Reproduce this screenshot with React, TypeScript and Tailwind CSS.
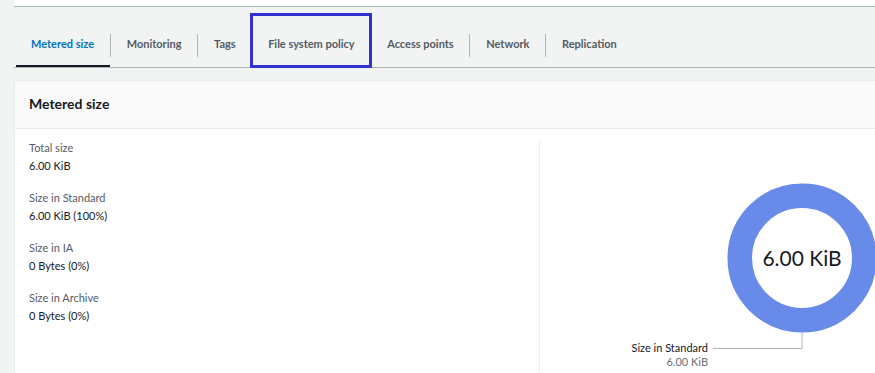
const tabs = [
  "Metered size",
  "Monitoring",
  "Tags",
  "File system policy",
  "Access points",
  "Network",
  "Replication",
];

const stats = [
  { label: "Total size", value: "6.00 KiB" },
  { label: "Size in Standard", value: "6.00 KiB (100%)" },
  { label: "Size in IA", value: "0 Bytes (0%)" },
  { label: "Size in Archive", value: "0 Bytes (0%)" },
];

function Tab({ label, index }: { label: string; index: number }) {
  const active = index === 0;
  const boxed = label === "File system policy";
  return (
    <div className="relative py-[10px]">
      <div
        className={
          "flex h-[23px] items-center pr-[15.5px] pb-[2px] text-[11px] font-bold " +
          (index > 0 ? "border-l border-[#aab7b8] pl-[16px] " : "pl-[17px] ") +
          (active ? "text-[#0073bb]" : "text-[#545b64]")
        }
      >
        {label}
      </div>
      {active && <div className="absolute bottom-0 left-[2px] right-0 h-[2px] bg-[#16191f]" />}
      {boxed && (
        <div className="absolute left-[-1px] right-[-2px] top-[-11px] bottom-[-1px] z-10 border-[3px] border-[#3431d1]" />
      )}
    </div>
  );
}

function Donut() {
  return (
    <svg width="335" height="232" className="block">
      <circle cx="262" cy="117" r="62.25" fill="none" stroke="#688ae8" strokeWidth="24.5" />
      <text
        x="262"
        y="125"
        textAnchor="middle"
        fontSize="21"
        fill="#16191f"
        fontFamily="Lato, sans-serif"
      >
        6.00 KiB
      </text>
      <polyline points="262,191 262,207.5 173,207.5" fill="none" stroke="#aab7b8" strokeWidth="1" />
      <text x="168" y="211" textAnchor="end" fontSize="11" fill="#16191f" fontFamily="Lato, sans-serif">
        Size in Standard
      </text>
      <text x="168" y="225" textAnchor="end" fontSize="11" fill="#687078" fontFamily="Lato, sans-serif">
        6.00 KiB
      </text>
    </svg>
  );
}

export default function App() {
  return (
    <div className="h-[373px] w-[875px] overflow-hidden bg-[#f2f3f3] font-['Lato',sans-serif]">
      <div className="ml-[14px] h-[7px] w-[880px] border-b border-[#aab7b8] bg-white" />

      <div className="ml-[14px] mt-[17px] flex w-[880px] border-b border-[#aab7b8]">
        {tabs.map((t, i) => (
          <Tab key={t} label={t} index={i} />
        ))}
      </div>

      <div className="ml-[14px] mt-[12px] w-[900px] border border-[#eaeded] bg-white">
        <div className="flex h-[48px] items-center border-b border-[#eaeded] bg-[#fafafa] px-[14px] pb-[3px] text-[14px] font-bold text-[#16191f]">
          Metered size
        </div>
        <div className="flex">
          <div className="w-[524px] pl-[14px] pt-[10px]">
            {stats.map((s) => (
              <div key={s.label} className="mb-[14px] text-[11px] leading-[18px]">
                <div className="text-[#545b64]">{s.label}</div>
                <div className="text-[#16191f]">{s.value}</div>
              </div>
            ))}
          </div>
          <div className="mt-[12px] h-[240px] border-l border-[#eaeded]">
            <Donut />
          </div>
        </div>
      </div>
    </div>
  );
}
